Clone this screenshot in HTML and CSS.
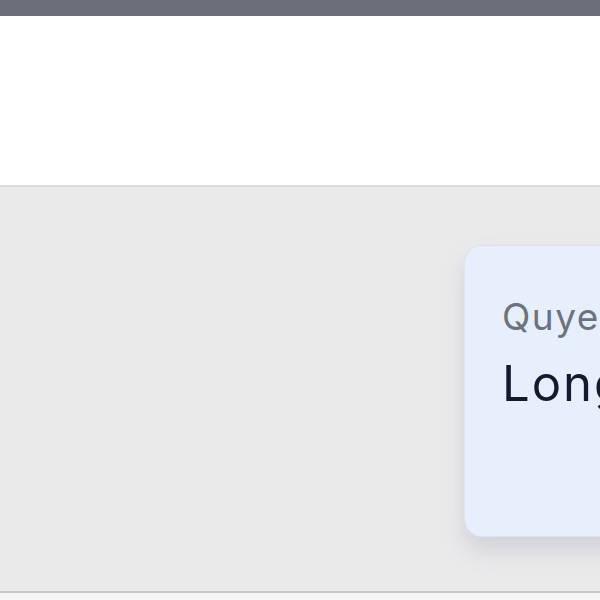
FILE: index.html
```html
<!DOCTYPE html>
<html lang="en">
<head>
    <meta charset="UTF-8">
    <meta name="viewport" content="width=device-width, initial-scale=1.0">
    <title>Quyen</title>
    <link rel="stylesheet" href="styles.css">
</head>
<body>
    <div class="topbar"></div>
    <div class="header"></div>
    <main class="content">
        <div class="card">
            <div class="card-label">Quyen</div>
            <div class="card-value">Long</div>
        </div>
    </main>
    <div class="footer"></div>
</body>
</html>
```

FILE: styles.css
```css
body {
    margin: 0;
    font-family: Inter, "Noto Sans", sans-serif;
    background-color: #f6f6f6;
    height: 600px;
    overflow: hidden;
    display: flex;
    flex-direction: column;
}
.topbar {
    height: 16px;
    background-color: #6a6e78;
    box-shadow: 0 1px 3px rgba(0, 0, 0, 0.15);
}
.header {
    height: 169px;
    background-color: #fff;
    border-bottom: 2px solid #dadada;
}
.content {
    height: 406px;
    background-color: #ebeaeb;
    border-bottom: 2px solid #c9c9cb;
    padding: 58px 0 0 464px;
    box-sizing: border-box;
    overflow: hidden;
    display: flex;
    align-items: flex-start;
}
.card {
    flex-shrink: 0;
    width: 320px;
    height: 292px;
    box-sizing: border-box;
    padding: 51px 40px 0 37px;
    background-color: #e8effc;
    border: 1px solid #dde3ee;
    border-radius: 18px;
    box-shadow: 0 14px 24px rgba(90, 100, 130, 0.18);
}
.card-label {
    font-size: 37px;
    line-height: 40px;
    letter-spacing: 1.5px;
    color: #6b7280;
}
.card-value {
    margin-top: 21px;
    font-size: 49px;
    line-height: 52px;
    letter-spacing: 2px;
    color: #111a2e;
}
.footer {
    flex: 1;
    background-color: #f6f6f6;
}
```
